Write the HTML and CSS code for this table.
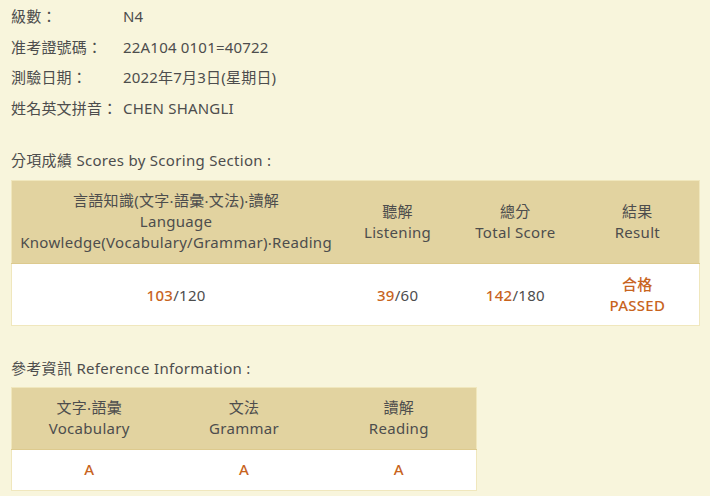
FILE: index.html
```html
<!DOCTYPE html>
<html lang="zh-Hant">
<head>
<meta charset="utf-8">
<title>成績</title>
<link rel="stylesheet" href="styles.css">
</head>
<body>
<div class="page">
  <div class="info">
    <div class="label">級數：</div><div class="value">N4</div>
    <div class="label">准考證號碼：</div><div class="value">22A104 0101=40722</div>
    <div class="label">測驗日期：</div><div class="value">2022年7月3日(星期日)</div>
    <div class="label">姓名英文拼音：</div><div class="value">CHEN SHANGLI</div>
  </div>

  <h2 class="section-title sec1">分項成績 Scores by Scoring Section :</h2>
  <table class="score-table t1">
    <colgroup>
      <col class="c1"><col class="c2"><col class="c3"><col class="c4">
    </colgroup>
    <thead>
      <tr>
        <th>言語知識(文字‧語彙‧文法)‧讀解<br>Language<br>Knowledge(Vocabulary/Grammar)‧Reading</th>
        <th>聽解<br>Listening</th>
        <th>總分<br>Total Score</th>
        <th>結果<br>Result</th>
      </tr>
    </thead>
    <tbody>
      <tr>
        <td><span class="hl">103</span>/120</td>
        <td><span class="hl">39</span>/60</td>
        <td><span class="hl">142</span>/180</td>
        <td class="hl">合格<br>PASSED</td>
      </tr>
    </tbody>
  </table>

  <h2 class="section-title sec2">參考資訊 Reference Information :</h2>
  <table class="score-table t2">
    <thead>
      <tr>
        <th>文字‧語彙<br>Vocabulary</th>
        <th>文法<br>Grammar</th>
        <th>讀解<br>Reading</th>
      </tr>
    </thead>
    <tbody>
      <tr>
        <td class="hl grade">A</td>
        <td class="hl grade">A</td>
        <td class="hl grade">A</td>
      </tr>
    </tbody>
  </table>
</div>
</body>
</html>
```

FILE: styles.css
```css
html, body {
  margin: 0;
  padding: 0;
  background: #f8f5dc;
}
body {
  font-family: "Noto Sans", "Noto Sans CJK TC", sans-serif;
  font-size: 15px;
  color: #4d4d4d;
}
.page {
  padding: 1px 11px 0 11px;
}
.info {
  display: grid;
  grid-template-columns: 112px 1fr;
  grid-auto-rows: 30.5px;
  align-items: center;
}
.label, .value {
  line-height: 20px;
  letter-spacing: 0.2px;
}
.section-title {
  font-size: 15px;
  font-weight: normal;
  margin: 0;
  line-height: 20px;
  letter-spacing: 0.3px;
}
.sec1 {
  margin-top: 27px;
  margin-bottom: 10px;
}
.sec2 {
  margin-top: 32px;
  margin-bottom: 9px;
}
.score-table {
  border-collapse: collapse;
  text-align: center;
  border: 1px solid #f0e7bd;
}
.t1 {
  width: 689px;
}
.t2 {
  width: 466px;
  table-layout: fixed;
}
.c1 { width: 329px; }
.c2 { width: 115px; }
.c3 { width: 121px; }
.c4 { width: 124px; }
.score-table th {
  background: #e2d3a0;
  font-weight: normal;
  line-height: 21px;
  color: #4d4d4d;
  letter-spacing: 0.3px;
  border-bottom: 1px solid #ddca8e;
}
.t1 th { padding: 9px 0 10px; height: 63px; }
.t2 th { padding: 9px 0 10px; height: 42px; }
.score-table td {
  background: #ffffff;
  line-height: 21px;
  color: #4d4d4d;
  letter-spacing: 0.3px;
}
.t1 td { padding: 10px 0 9px; height: 42px; }
.t2 td { padding: 9px 0 10px; height: 21px; }
.hl {
  color: #c8641e;
  font-weight: 500;
}
td.hl {
  color: #c8641e;
}
```
